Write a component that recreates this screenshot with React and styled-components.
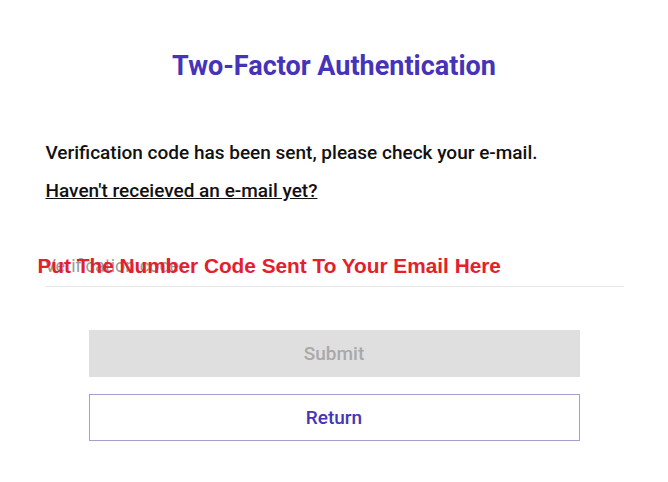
import React from "react";
import styled, { createGlobalStyle } from "styled-components";

const GlobalStyle = createGlobalStyle`
  body {
    margin: 0;
    background: #ffffff;
    font-family: Roboto, "Noto Sans", sans-serif;
  }
`;

const Page = styled.div`
  width: 668px;
  height: 482px;
  display: flex;
  flex-direction: column;
  align-items: center;
  box-sizing: border-box;
  padding-top: 49px;
`;

const Title = styled.h1`
  margin: 0;
  font-size: 27px;
  font-weight: 700;
  color: #4634b8;
  line-height: 34px;
`;

const Body = styled.div`
  width: 579px;
  margin-top: 58px;
  display: flex;
  flex-direction: column;
`;

const Message = styled.p`
  margin: 0;
  font-size: 19px;
  font-weight: 500;
  color: #111;
  line-height: 24px;
  padding-left: 1px;
`;

const ResendLink = styled.a`
  margin-top: 14px;
  font-size: 19px;
  font-weight: 500;
  color: #111;
  line-height: 24px;
  text-decoration: underline;
  align-self: flex-start;
  padding-left: 1px;
  cursor: pointer;
`;

const Field = styled.div`
  position: relative;
  margin-top: 46px;
`;

const CodeInput = styled.input`
  width: 100%;
  box-sizing: border-box;
  border: none;
  border-bottom: 1px solid #e6e6e6;
  outline: none;
  font-family: Roboto, sans-serif;
  font-size: 18px;
  padding: 6px 0 9px;
  line-height: 22px;
  color: #333;
  &::placeholder {
    color: #9a9a9a;
  }
`;

const Annotation = styled.span`
  position: absolute;
  left: -7px;
  top: 5px;
  font-family: "Liberation Sans", Arial, sans-serif;
  font-weight: 700;
  font-size: 20.8px;
  line-height: 24px;
  color: #e3202b;
  pointer-events: none;
  white-space: nowrap;
`;

const Actions = styled.div`
  width: 491px;
  margin-top: 43px;
  display: flex;
  flex-direction: column;
  gap: 17px;
`;

const Button = styled.button`
  height: 47px;
  width: 100%;
  font-family: Roboto, sans-serif;
  font-size: 19px;
  font-weight: 500;
  cursor: pointer;
  background: ${(p) => (p.$outline ? "#ffffff" : "#dfdfdf")};
  color: ${(p) => (p.$outline ? "#4634b8" : "#a9a9a9")};
  border: ${(p) => (p.$outline ? "1px solid #a99ccf" : "none")};
`;

export default function App() {
  return (
    <>
      <GlobalStyle />
      <Page>
        <Title>Two-Factor Authentication</Title>
        <Body>
          <Message>Verification code has been sent, please check your e-mail.</Message>
          <ResendLink>Haven't receieved an e-mail yet?</ResendLink>
          <Field>
            <CodeInput placeholder="Verification code" />
            <Annotation>Put The Number Code Sent To Your Email Here</Annotation>
          </Field>
        </Body>
        <Actions>
          <Button disabled>Submit</Button>
          <Button $outline>Return</Button>
        </Actions>
      </Page>
    </>
  );
}
